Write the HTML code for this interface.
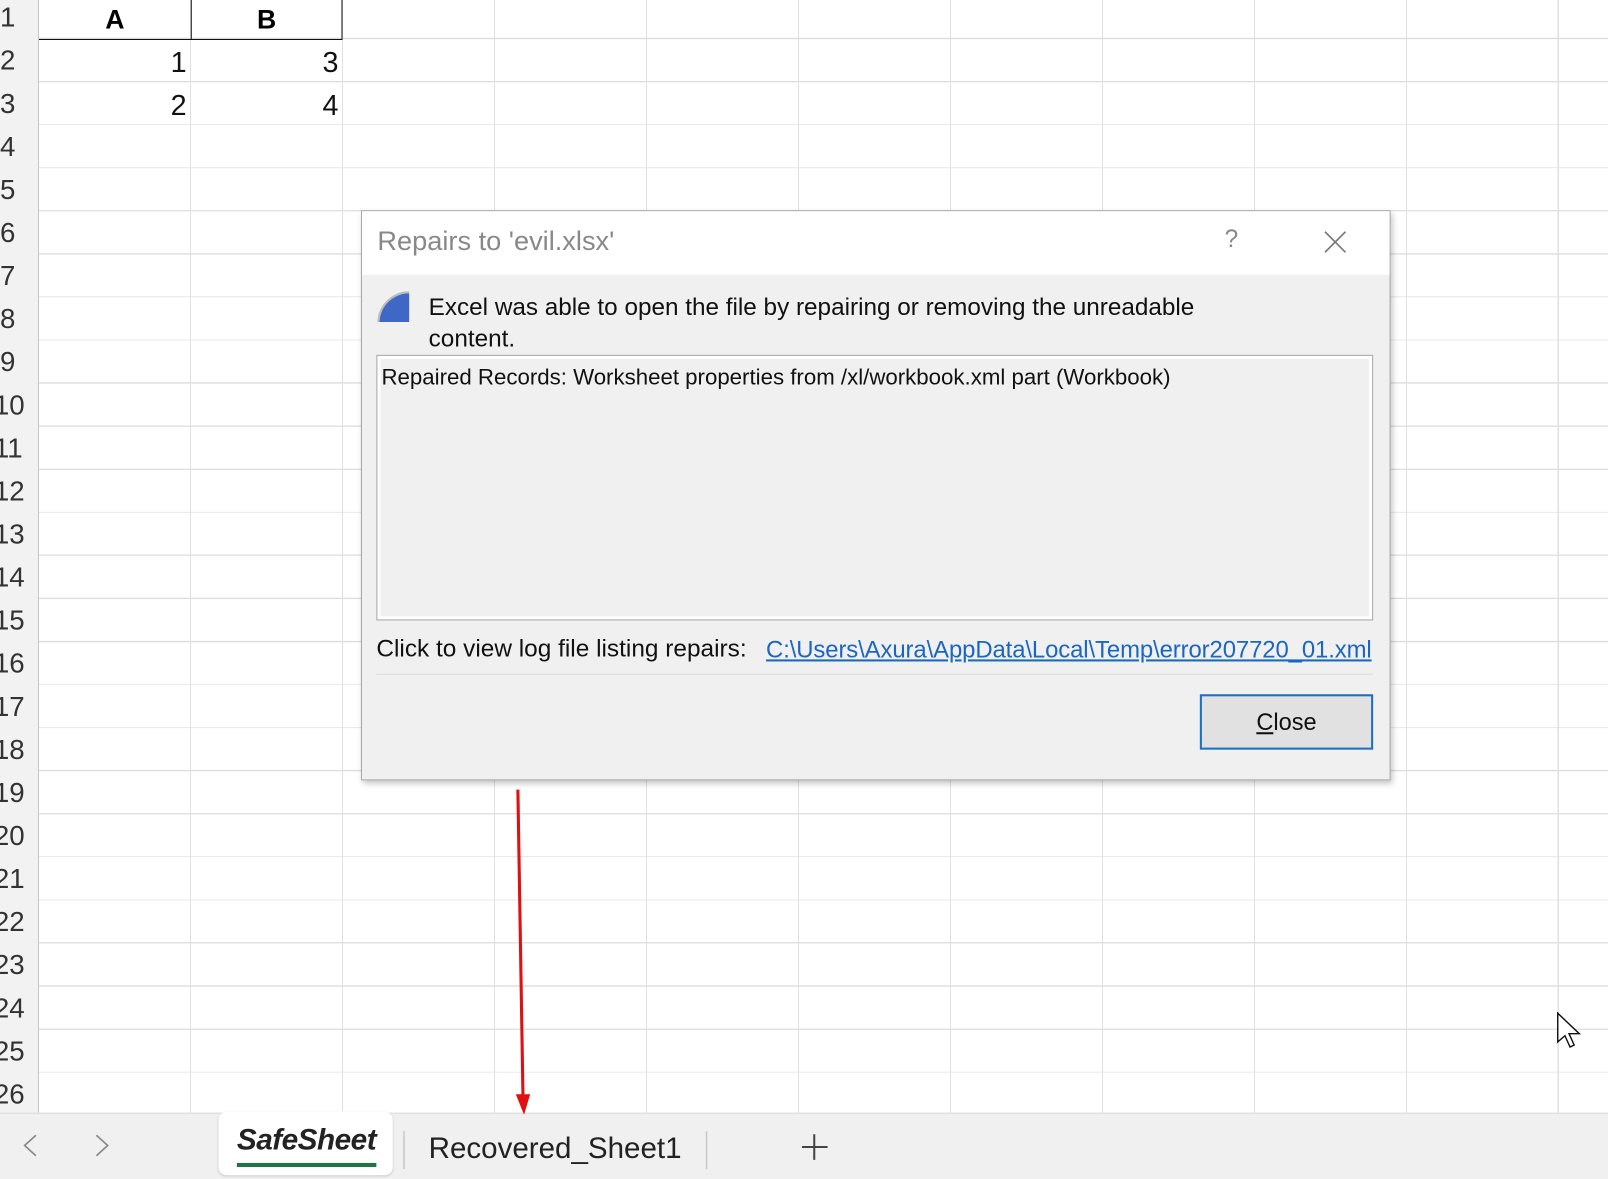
<!DOCTYPE html>
<html><head><meta charset="utf-8"><style>
html,body{margin:0;padding:0;width:1608px;height:1179px;overflow:hidden;background:#fff}
#w{position:absolute;left:0;top:0;width:1568px;height:1150px;transform:scale(1.02551);transform-origin:0 0;overflow:hidden;font-family:"Liberation Sans Narrow","Liberation Sans",sans-serif;}
.a{position:absolute}
#grid{left:38px;top:0;width:1530px;height:1085px;
background-image:repeating-linear-gradient(to right,transparent 0 147.2px,#e0e0e0 147.2px 148.2px),repeating-linear-gradient(to bottom,transparent 0 41px,#dcdcdc 41px 42px);
background-position:0 0,0 -4px;}
#rh{left:0;top:0;width:38px;height:1085px;background:#f2f2f2;border-right:1px solid #c6c6c6;box-sizing:border-box}
.rn{position:absolute;width:40px;height:42px;font-size:27px;color:#333;line-height:42px}
.num{position:absolute;font-size:28px;color:#111;line-height:42px;text-align:right;width:140px}
#dlg{left:352px;top:205px;width:1002px;height:554px;background:#f0f0f0;border:1px solid #a8a8a8;box-shadow:2px 3px 6px rgba(0,0,0,.25);font-family:"Liberation Sans",sans-serif}
</style></head><body><div id="w">
<div class="a" id="grid"></div>
<div class="a" style="left:38px;top:0;width:296px;height:38px;border-bottom:1px solid #111;"></div>
<div class="a" style="left:186px;top:0;width:148px;height:38px;border-left:1px solid #111;border-right:1px solid #111;box-sizing:border-box"></div>
<div class="a" style="left:38px;top:0;width:148px;text-align:center;font-weight:bold;font-size:26px;line-height:38px">A</div>
<div class="a" style="left:186px;top:0;width:148px;text-align:center;font-weight:bold;font-size:26px;line-height:38px">B</div>
<div class="num" style="left:42px;top:40px">1</div>
<div class="num" style="left:190px;top:40px">3</div>
<div class="num" style="left:42px;top:82px">2</div>
<div class="num" style="left:190px;top:82px">4</div>
<div class="a" id="rh"></div>
<div class="a" style="left:0;top:0">
<div class="rn" style="left:0;top:-4px">1</div><div class="rn" style="left:0;top:38px">2</div><div class="rn" style="left:0;top:80px">3</div><div class="rn" style="left:0;top:122px">4</div><div class="rn" style="left:0;top:164px">5</div><div class="rn" style="left:0;top:206px">6</div><div class="rn" style="left:0;top:248px">7</div><div class="rn" style="left:0;top:290px">8</div><div class="rn" style="left:0;top:332px">9</div>
<div class="rn" style="left:-6px;top:374px">10</div><div class="rn" style="left:-6px;top:416px">11</div><div class="rn" style="left:-6px;top:458px">12</div><div class="rn" style="left:-6px;top:500px">13</div><div class="rn" style="left:-6px;top:542px">14</div><div class="rn" style="left:-6px;top:584px">15</div><div class="rn" style="left:-6px;top:626px">16</div><div class="rn" style="left:-6px;top:668px">17</div><div class="rn" style="left:-6px;top:710px">18</div><div class="rn" style="left:-6px;top:752px">19</div><div class="rn" style="left:-6px;top:794px">20</div><div class="rn" style="left:-6px;top:836px">21</div><div class="rn" style="left:-6px;top:878px">22</div><div class="rn" style="left:-6px;top:920px">23</div><div class="rn" style="left:-6px;top:962px">24</div><div class="rn" style="left:-6px;top:1004px">25</div><div class="rn" style="left:-6px;top:1046px">26</div>
</div>
<!-- tab bar -->
<div class="a" style="left:0;top:1085px;width:1568px;height:65px;background:#f0f0f0;border-top:1px solid #dadada"></div>
<svg class="a" style="left:0;top:1085px" width="1568" height="65">
<path d="M35 22 L24 32 L35 42" fill="none" stroke="#888" stroke-width="1.6"/>
<path d="M94 22 L105 32 L94 42" fill="none" stroke="#888" stroke-width="1.6"/>
<path d="M394 18 V55 M689 18 V55" stroke="#c8c8c8" stroke-width="1.5"/>
<path d="M794 21 V46 M782 33.5 H807" stroke="#444" stroke-width="2"/>
</svg>
<div class="a" style="left:213px;top:1084px;width:170px;height:62px;background:#fff;border-radius:8px;box-shadow:0 1px 2px rgba(0,0,0,.15)"></div>
<div class="a" style="left:231px;top:1096px;font-size:29px;font-style:italic;font-weight:bold;color:#222;letter-spacing:-.5px">SafeSheet</div>
<div class="a" style="left:231px;top:1134px;width:136px;height:4px;background:#217346"></div>
<div class="a" style="left:418px;top:1104px;font-size:28.8px;color:#222">Recovered_Sheet1</div>
<!-- dialog -->
<div class="a" id="dlg">
<div class="a" style="left:0;top:0;width:1002px;height:62px;background:#fff"></div>
<div class="a" style="left:15px;top:14px;font-size:26.5px;color:#888">Repairs to 'evil.xlsx'</div>
<div class="a" style="left:841px;top:14px;font-size:24px;color:#888">?</div>
<svg class="a" style="left:938px;top:19px" width="22" height="22"><path d="M1 1 L21 21 M21 1 L1 21" stroke="#777" stroke-width="1.6"/></svg>
<svg class="a" style="left:15px;top:78px" width="32" height="32"><path d="M31 2 A29 29 0 0 0 2 30 L31 30 Z" fill="#3f67c6"/><path d="M31 1 A30 30 0 0 0 1 30" fill="none" stroke="#bbb" stroke-width="2"/></svg>
<div class="a" style="left:65px;top:79px;font-size:23.7px;line-height:31px;color:#111;width:900px">Excel was able to open the file by repairing or removing the unreadable<br>content.</div>
<div class="a" style="left:14px;top:140px;width:972px;height:259px;border:1px solid #a8a8a8;box-shadow:inset 0 0 0 3px #fff;box-sizing:border-box;background:#f0f0f0"></div>
<div class="a" style="left:19px;top:149px;font-size:21.7px;color:#111">Repaired Records: Worksheet properties from /xl/workbook.xml part (Workbook)</div>
<div class="a" style="left:14px;top:413px;font-size:23.8px;color:#111">Click to view log file listing repairs:</div>
<div class="a" style="left:394px;top:414px;font-size:23.3px;color:#1a66c0;text-decoration:underline;letter-spacing:-.1px">C:\Users\Axura\AppData\Local\Temp\error207720_01.xml</div>
<div class="a" style="left:14px;top:451px;width:972px;height:1px;background:#dcdcdc"></div>
<div class="a" style="left:817px;top:471px;width:169px;height:54px;border:2px solid #1f6fc1;box-sizing:border-box;background:#e1e1e1;text-align:center;font-size:23px;line-height:50px;color:#111"><u>C</u>lose</div>
</div>
<!-- red arrow -->
<svg class="a" style="left:490px;top:765px" width="40" height="330"><path d="M15 5 L20 306" stroke="#e01010" stroke-width="3"/><path d="M13 302 L27 302 L21 322 Z" fill="#e01010"/></svg>
<!-- cursor -->
<svg class="a" style="left:1517px;top:986px" width="30" height="40"><path d="M2 2 L2 30 L9 24 L14 35 L18 33 L13 22 L23 22 Z" fill="#fff" stroke="#111" stroke-width="1.4"/></svg>
</div></body></html>
